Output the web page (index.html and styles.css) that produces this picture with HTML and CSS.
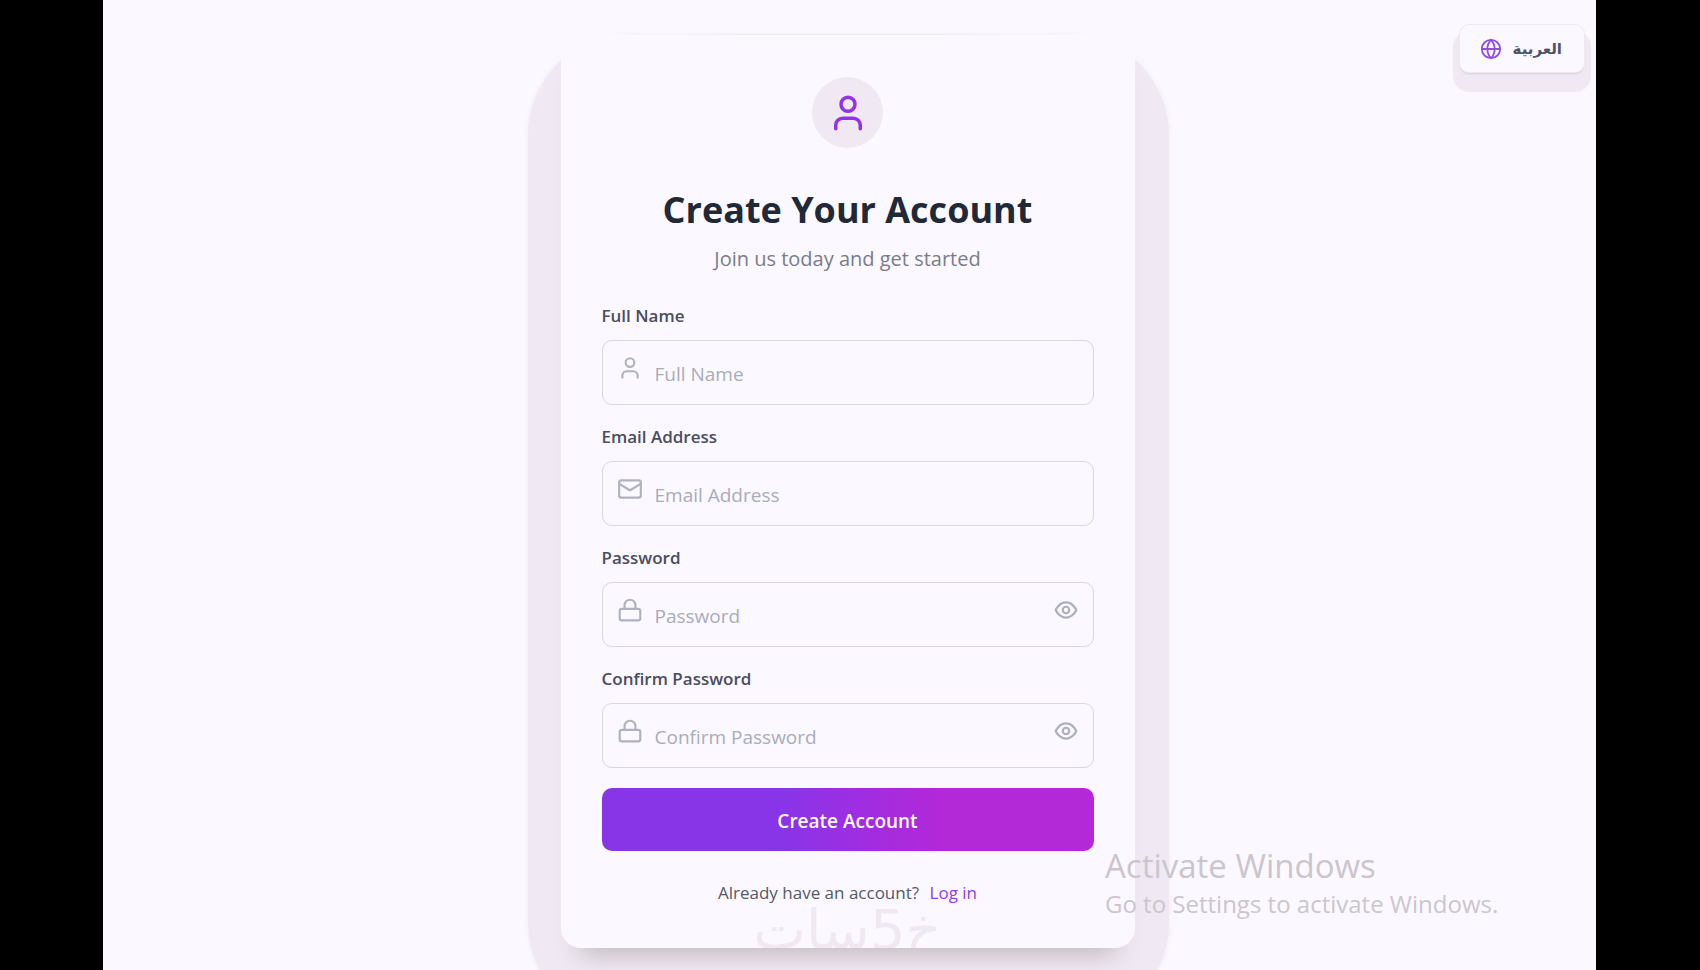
FILE: index.html
```html
<!DOCTYPE html>
<html lang="en">
<head>
<meta charset="utf-8">
<title>Create Your Account</title>
<link rel="stylesheet" href="styles.css">
</head>
<body>
<svg class="sprite" aria-hidden="true">
  <symbol id="user" viewBox="0 0 24 24"><path d="M19 21v-2a4 4 0 0 0-4-4H9a4 4 0 0 0-4 4v2"/><circle cx="12" cy="7" r="4"/></symbol>
  <symbol id="mail" viewBox="0 0 24 24"><rect x="2" y="4" width="20" height="16" rx="2"/><path d="m22 7-8.970 5.700a1.940 1.940 0 0 1-2.060 0L2 7"/></symbol>
  <symbol id="lock" viewBox="0 0 24 24"><rect x="2.500" y="11" width="19" height="10.500" rx="2"/><path d="M7 11V7.500a5 5 0 0 1 10 0V11"/></symbol>
  <symbol id="eye" viewBox="0 0 24 24"><path d="M2.500 12s3-7 9.500-7 9.500 7 9.500 7-3 7-9.500 7-9.500-7-9.500-7Z"/><circle cx="12" cy="12" r="3"/></symbol>
  <symbol id="globe" viewBox="0 0 24 24"><circle cx="12" cy="12" r="10"/><path d="M12 2a14.500 14.500 0 0 0 0 20 14.500 14.500 0 0 0 0-20M2 12h20"/></symbol>
</svg>
<div class="stage">
  <button class="language" type="button" lang="ar">
    <svg class="icon icon-globe" aria-hidden="true"><use href="#globe"/></svg>
    <span>العربية</span>
  </button>
  <main class="card">
    <div class="avatar"><svg class="icon icon-avatar" aria-hidden="true"><use href="#user"/></svg></div>
    <h1 class="title">Create Your Account</h1>
    <p class="subtitle">Join us today and get started</p>
    <form class="form">
      <div class="group">
        <label class="label" for="name">Full Name</label>
        <div class="field">
          <svg class="icon icon-field" aria-hidden="true"><use href="#user"/></svg>
          <input class="input" id="name" type="text" placeholder="Full Name">
        </div>
      </div>
      <div class="group">
        <label class="label" for="email">Email Address</label>
        <div class="field">
          <svg class="icon icon-field" aria-hidden="true"><use href="#mail"/></svg>
          <input class="input" id="email" type="email" placeholder="Email Address">
        </div>
      </div>
      <div class="group">
        <label class="label" for="password">Password</label>
        <div class="field">
          <svg class="icon icon-field" aria-hidden="true"><use href="#lock"/></svg>
          <input class="input" id="password" type="password" placeholder="Password">
          <button class="reveal" type="button" aria-label="Show password"><svg class="icon icon-eye" aria-hidden="true"><use href="#eye"/></svg></button>
        </div>
      </div>
      <div class="group">
        <label class="label" for="confirm">Confirm Password</label>
        <div class="field">
          <svg class="icon icon-field" aria-hidden="true"><use href="#lock"/></svg>
          <input class="input" id="confirm" type="password" placeholder="Confirm Password">
          <button class="reveal" type="button" aria-label="Show password"><svg class="icon icon-eye" aria-hidden="true"><use href="#eye"/></svg></button>
        </div>
      </div>
      <button class="submit" type="submit">Create Account</button>
    </form>
    <p class="signin">Already have an account? <a class="link" href="#login">Log in</a></p>
    <div class="brand" lang="ar" dir="rtl">خ5سات</div>
  </main>
  <aside class="activation">
    <p class="activation-title">Activate Windows</p>
    <p class="activation-text">Go to Settings to activate Windows.</p>
  </aside>
</div>
</body>
</html>
```
FILE: styles.css
```css
* { box-sizing: border-box; }
body {
  margin: 0;
  background: #000;
  font-family: "Open Sans", "Noto Sans", "DejaVu Sans", sans-serif;
}
h1, p { margin: 0; }
button, input { font: inherit; }
.sprite { position: absolute; width: 0; height: 0; }
.icon {
  display: block;
  fill: none;
  stroke: currentColor;
  stroke-width: 2;
  stroke-linecap: round;
  stroke-linejoin: round;
}
.stage {
  position: relative;
  isolation: isolate;
  overflow: hidden;
  min-height: 100vh;
  margin: 0 104px 0 103px;
  padding: 34px 28px 20px 24px;
  background: #fcf8ff;
}
.language {
  position: absolute;
  top: 24px;
  right: 11px;
  display: flex;
  align-items: center;
  gap: 11px;
  height: 49px;
  padding: 0 22px 0 20px;
  border: 1px solid #eee9f1;
  border-radius: 10px;
  background: #fcf8ff;
  color: #50546a;
  font-family: "DejaVu Sans", sans-serif;
  font-size: 15px;
  font-weight: 700;
  box-shadow: 0 2px 2px -1px #d3cfd7, 0 13px 1px 6px #f0e9f4;
}
.icon-globe { width: 22px; height: 22px; color: #9150dc; }
.card {
  position: relative;
  display: flex;
  flex-direction: column;
  max-width: 574px;
  margin: 0 auto;
  padding: 43px 41px 42px;
  border-radius: 20px;
  background: linear-gradient(90deg, transparent 40px, #f0e9f4 200px 360px, transparent 530px) top / 100% 1px no-repeat #fcf8ff;
  box-shadow: 0 26px 24px -18px #c6bcc1;
}
.card::before {
  content: "";
  position: absolute;
  z-index: -1;
  inset: 1px -34px -75px -33px;
  border-radius: 100px;
  background: #f0e9f4;
  box-shadow: 0 0 5px #f0e9f4;
}
.avatar {
  display: grid;
  place-items: center;
  align-self: center;
  width: 71px;
  height: 71px;
  border-radius: 50%;
  background: #f0e9f4;
  color: #9233ea;
}
.icon-avatar { width: 42px; height: 42px; }
.title {
  margin-top: 40px;
  color: #1f2937;
  font-size: 36px;
  line-height: 44px;
  text-align: center;
}
.subtitle {
  margin-top: 13px;
  color: #7a7d88;
  font-size: 20px;
  line-height: 28px;
  text-align: center;
}
.form { display: flex; flex-direction: column; gap: 20px; margin-top: 31px; }
.group { display: flex; flex-direction: column; gap: 12px; }
.label {
  align-self: flex-start;
  color: #4a4d60;
  font-size: 17px;
  font-weight: 600;
  line-height: 24px;
}
.field { position: relative; }
.input {
  display: block;
  width: 100%;
  height: 65px;
  padding: 2px 50px 0 52px;
  border: 1px solid #d3d9df;
  border-radius: 10px;
  background: transparent;
  color: #374151;
  font-size: 19px;
}
.input::placeholder { color: #a8adb9; opacity: 1; }
.icon-field {
  position: absolute;
  top: 15px;
  left: 15px;
  width: 26px;
  height: 26px;
  color: #aeb3bf;
}
.reveal {
  position: absolute;
  top: 15px;
  right: 15px;
  padding: 0;
  border: 0;
  background: none;
  color: #aab0bd;
}
.icon-eye { width: 26px; height: 26px; }
.submit {
  height: 63px;
  padding: 2px 0 0;
  border: 0;
  border-radius: 10px;
  background: linear-gradient(90deg, #8835e8 36%, #a42cdf 56%, #b328d7 70%);
  color: #fcf8ff;
  font-size: 19px;
  font-weight: 600;
}
.signin {
  margin-top: 29px;
  color: #555869;
  font-size: 17px;
  line-height: 26px;
  text-align: center;
}
.link { margin-left: 6px; color: #9438e8; font-weight: 500; text-decoration: none; }
.brand {
  position: absolute;
  bottom: 0;
  left: 0;
  right: 0;
  height: 41px;
  overflow: hidden;
  color: #f0e9f4;
  font-family: "DejaVu Sans", sans-serif;
  font-size: 56px;
  line-height: 46px;
  text-align: center;
}
.activation {
  position: absolute;
  right: 88px;
  bottom: 49px;
  width: 403px;
  color: #cbc6cd;
}
.activation-title { font-size: 33px; line-height: 42px; }
.activation-text { font-size: 24px; line-height: 34px; }
```
